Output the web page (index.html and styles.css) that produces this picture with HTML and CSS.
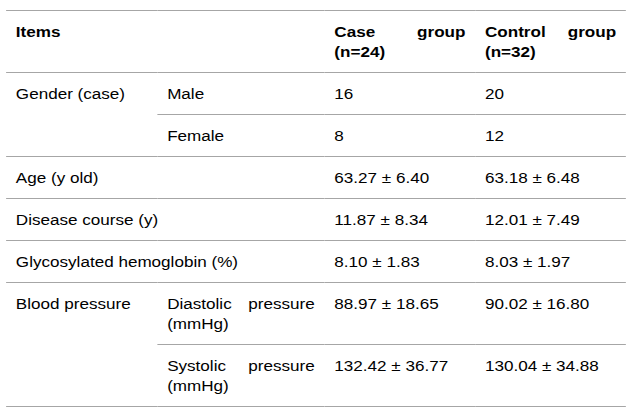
FILE: index.html
```html
<!DOCTYPE html>
<html lang="en">
<head>
<meta charset="utf-8">
<title>Baseline characteristics</title>
<link rel="stylesheet" href="styles.css">
</head>
<body>
<div class="stretch">
  <table class="data">
    <colgroup>
      <col class="c1"><col class="c2"><col class="c3"><col class="c4">
    </colgroup>
    <thead>
      <tr>
        <th colspan="2">Items</th>
        <th>Case group (n=24)</th>
        <th>Control group (n=32)</th>
      </tr>
    </thead>
    <tbody>
      <tr>
        <td rowspan="2">Gender (case)</td>
        <td>Male</td>
        <td>16</td>
        <td>20</td>
      </tr>
      <tr>
        <td>Female</td>
        <td>8</td>
        <td>12</td>
      </tr>
      <tr>
        <td colspan="2">Age (y old)</td>
        <td>63.27 ± 6.40</td>
        <td>63.18 ± 6.48</td>
      </tr>
      <tr>
        <td colspan="2">Disease course (y)</td>
        <td>11.87 ± 8.34</td>
        <td>12.01 ± 7.49</td>
      </tr>
      <tr>
        <td colspan="2">Glycosylated hemoglobin (%)</td>
        <td>8.10 ± 1.83</td>
        <td>8.03 ± 1.97</td>
      </tr>
      <tr>
        <td rowspan="2">Blood pressure</td>
        <td>Diastolic pressure (mmHg)</td>
        <td>88.97 ± 18.65</td>
        <td>90.02 ± 16.80</td>
      </tr>
      <tr>
        <td>Systolic pressure (mmHg)</td>
        <td>132.42 ± 36.77</td>
        <td>130.04 ± 34.88</td>
      </tr>
    </tbody>
  </table>
</div>
</body>
</html>
```

FILE: styles.css
```css
html, body {
  margin: 0;
  padding: 0;
  background: #ffffff;
}

.stretch {
  width: 523px;
  padding: 10px 0 0 5px;
  box-sizing: border-box;
  transform: scaleX(1.22);
  transform-origin: 0 0;
}

.data {
  width: 508px;
  border-collapse: collapse;
  table-layout: fixed;
  font-family: "Liberation Sans", Arial, sans-serif;
  font-size: 14px;
  line-height: 20px;
  color: #000000;
}

.c1 { width: 124px; }
.c2 { width: 137px; }
.c3 { width: 123.5px; }
.c4 { width: 123.5px; }

.data th,
.data td {
  padding: 11px 8px 10px 8px;
  vertical-align: top;
  text-align: justify;
  border-top: 1px solid #a6a6a6;
  border-bottom: 1px solid #a6a6a6;
}

.data th {
  font-weight: bold;
}
```
